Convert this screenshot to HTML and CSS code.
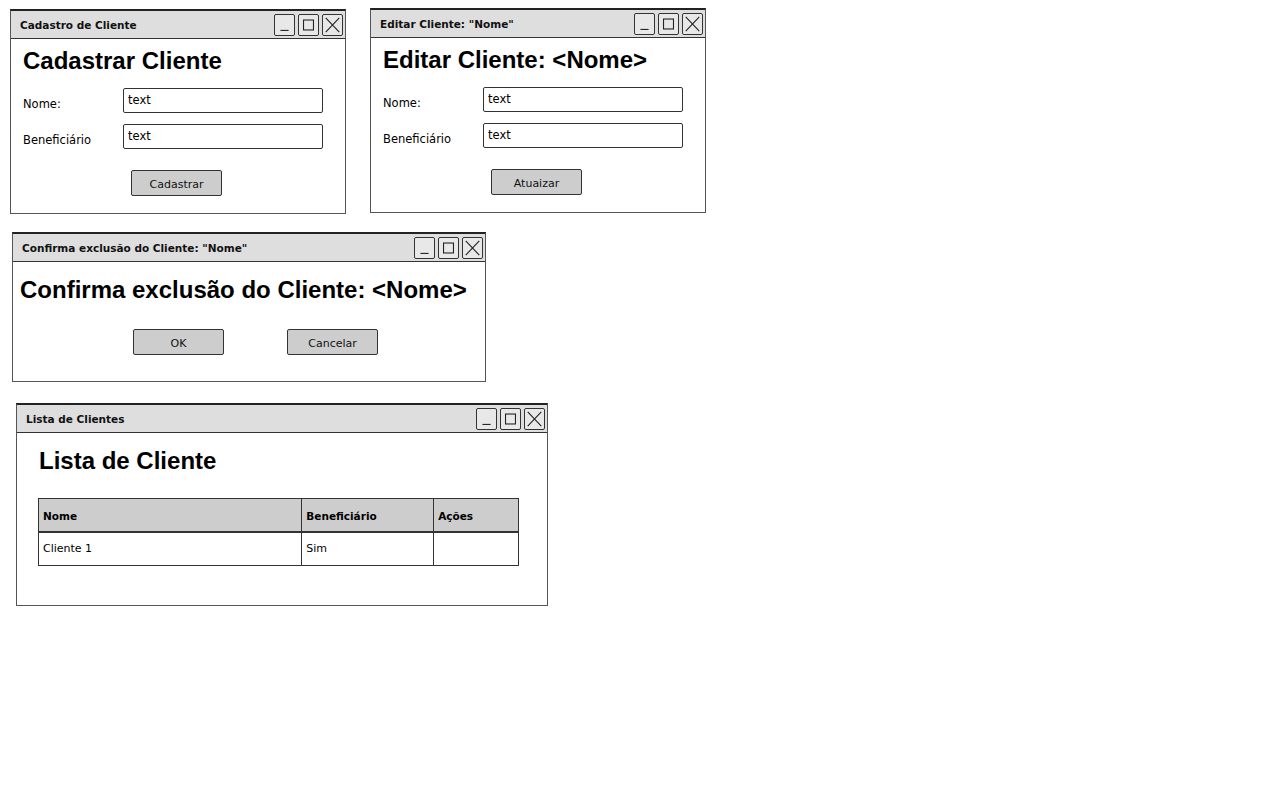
FILE: index.html
```html
<!DOCTYPE html>
<html lang="pt">
<head>
<meta charset="utf-8">
<title>Clientes - Mockups</title>
<link rel="stylesheet" href="styles.css">
</head>
<body>
<div class="canvas">

  <section class="win win-cadastro">
    <header class="titlebar">
      <span class="title">Cadastro de Cliente</span>
      <div class="controls">
        <span class="ctl"><svg viewBox="0 0 21 22"><line x1="6" y1="17" x2="15" y2="17"/></svg></span>
        <span class="ctl"><svg viewBox="0 0 21 22"><rect x="5" y="5.5" width="11" height="11"/></svg></span>
        <span class="ctl"><svg viewBox="0 0 21 22"><path d="M3 3 L18 19 M18 3 L3 19"/></svg></span>
      </div>
    </header>
    <div class="content">
      <h1 class="heading">Cadastrar Cliente</h1>
      <div class="form">
        <label class="lbl">Nome:</label><div class="input">text</div>
        <label class="lbl">Beneficiário</label><div class="input">text</div>
      </div>
      <div class="actions center"><button class="btn">Cadastrar</button></div>
    </div>
  </section>

  <section class="win win-editar">
    <header class="titlebar">
      <span class="title">Editar Cliente: "Nome"</span>
      <div class="controls">
        <span class="ctl"><svg viewBox="0 0 21 22"><line x1="6" y1="17" x2="15" y2="17"/></svg></span>
        <span class="ctl"><svg viewBox="0 0 21 22"><rect x="5" y="5.5" width="11" height="11"/></svg></span>
        <span class="ctl"><svg viewBox="0 0 21 22"><path d="M3 3 L18 19 M18 3 L3 19"/></svg></span>
      </div>
    </header>
    <div class="content">
      <h1 class="heading">Editar Cliente: &lt;Nome&gt;</h1>
      <div class="form">
        <label class="lbl">Nome:</label><div class="input">text</div>
        <label class="lbl">Beneficiário</label><div class="input">text</div>
      </div>
      <div class="actions center"><button class="btn">Atuaizar</button></div>
    </div>
  </section>

  <section class="win win-confirma">
    <header class="titlebar">
      <span class="title">Confirma exclusão do Cliente: "Nome"</span>
      <div class="controls">
        <span class="ctl"><svg viewBox="0 0 21 22"><line x1="6" y1="17" x2="15" y2="17"/></svg></span>
        <span class="ctl"><svg viewBox="0 0 21 22"><rect x="5" y="5.5" width="11" height="11"/></svg></span>
        <span class="ctl"><svg viewBox="0 0 21 22"><path d="M3 3 L18 19 M18 3 L3 19"/></svg></span>
      </div>
    </header>
    <div class="content content-confirma">
      <h1 class="heading">Confirma exclusão do Cliente: &lt;Nome&gt;</h1>
      <div class="actions pair">
        <button class="btn">OK</button>
        <button class="btn">Cancelar</button>
      </div>
    </div>
  </section>

  <section class="win win-lista">
    <header class="titlebar">
      <span class="title">Lista de Clientes</span>
      <div class="controls">
        <span class="ctl"><svg viewBox="0 0 21 22"><line x1="6" y1="17" x2="15" y2="17"/></svg></span>
        <span class="ctl"><svg viewBox="0 0 21 22"><rect x="5" y="5.5" width="11" height="11"/></svg></span>
        <span class="ctl"><svg viewBox="0 0 21 22"><path d="M3 3 L18 19 M18 3 L3 19"/></svg></span>
      </div>
    </header>
    <div class="content content-lista">
      <h1 class="heading">Lista de Cliente</h1>
      <table class="grid">
        <thead>
          <tr><th class="c-nome">Nome</th><th class="c-benef">Beneficiário</th><th class="c-acoes">Ações</th></tr>
        </thead>
        <tbody>
          <tr><td>Cliente 1</td><td>Sim</td><td></td></tr>
        </tbody>
      </table>
    </div>
  </section>

</div>
</body>
</html>
```

FILE: styles.css
```css
* { box-sizing: border-box; }

html, body {
  margin: 0;
  padding: 0;
  background: #fff;
}

body {
  font-family: "DejaVu Sans", "Liberation Sans", sans-serif;
  font-size: 11px;
  color: #000;
}

.canvas {
  position: relative;
  width: 1280px;
  height: 800px;
}

/* windows on the mockup canvas */
.win {
  position: absolute;
  background: #fff;
  border: 1.5px solid #555;
  border-top: 2px solid #222;
  display: flex;
  flex-direction: column;
}

.win-cadastro { left: 10px; top: 9px;  width: 336px; height: 205px; }
.win-editar   { left: 370px; top: 8px; width: 336px; height: 205px; }
.win-confirma { left: 12px; top: 232px; width: 474px; height: 150px; }
.win-lista    { left: 16px; top: 403px; width: 532px; height: 203px; }

.titlebar {
  height: 28px;
  flex: none;
  background: #dedede;
  border-bottom: 1.5px solid #333;
  display: flex;
  align-items: center;
  justify-content: space-between;
  padding: 0 2px 0 9px;
}

.title {
  font-weight: bold;
  font-size: 10.5px;
  color: #111;
}

.controls {
  display: flex;
  gap: 3px;
  padding-top: 1px;
}

.ctl {
  width: 21px;
  height: 22px;
  border: 1px solid #333;
  border-radius: 2px;
  background: #e8e8e8;
  display: block;
}

.ctl svg {
  width: 100%;
  height: 100%;
  display: block;
  fill: none;
  stroke: #222;
  stroke-width: 1.2;
}

.content {
  padding: 8px 0 0 12px;
  display: flex;
  flex-direction: column;
}

.heading {
  margin: 0;
  font-family: "Liberation Sans", Arial, sans-serif;
  font-weight: bold;
  font-size: 24px;
  line-height: 28px;
  color: #000;
}

.form {
  margin-top: 13px;
  display: grid;
  grid-template-columns: 100px 200px;
  row-gap: 11px;
  align-items: center;
}

.lbl {
  padding-top: 7px;
  font-size: 11.5px;
}

.input {
  height: 25px;
  border: 1.5px solid #333;
  border-radius: 2px;
  padding: 4px 0 0 4px;
  line-height: 14px;
  font-size: 11.5px;
  background: #fff;
}

.actions {
  display: flex;
}

.actions.center {
  margin-top: 21px;
  padding-left: 108px;
}

.btn {
  width: 91px;
  height: 26px;
  background: #cdcdcd;
  border: 1px solid #333;
  border-radius: 2px;
  font-family: "DejaVu Sans", "Liberation Sans", sans-serif;
  font-size: 11px;
  padding: 3px 0 0;
  color: #111;
}

.content-confirma {
  padding: 14px 0 0 7px;
}

.actions.pair {
  margin-top: 25px;
  padding-left: 113px;
  gap: 63px;
}

.content-lista {
  padding: 14px 0 0 22px;
}

.grid {
  margin-top: 23px;
  margin-left: -1px;
  width: 481px;
  border-collapse: collapse;
  border: 1px solid #222;
}

.grid th,
.grid td {
  border: 1px solid #333;
  text-align: left;
  padding: 0 4px;
  font-size: 11px;
}

.grid th {
  height: 33px;
  background: #cdcdcd;
  font-weight: bold;
  font-size: 10.5px;
  border-bottom: 2px solid #333;
  padding-top: 3px;
}

.grid td {
  height: 34px;
}

.c-nome { width: 264px; }
.c-benef { width: 132px; }
.c-acoes { width: 85px; }
```
